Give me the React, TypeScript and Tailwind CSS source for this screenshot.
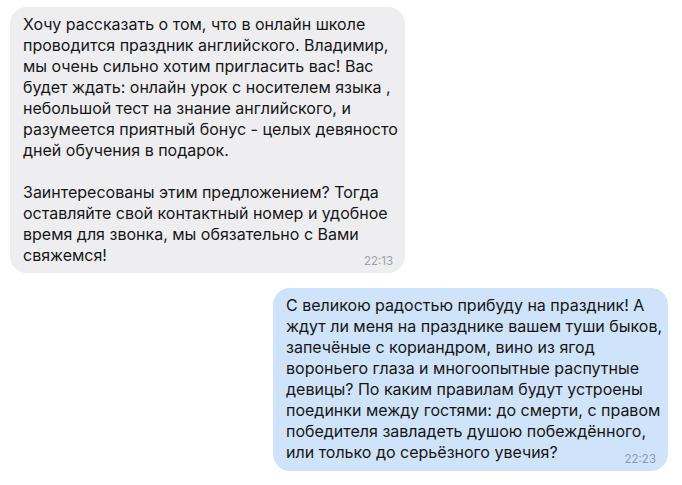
import React from 'react';

interface BubbleProps {
  lines: string[];
  time: string;
  outgoing?: boolean;
}

const Bubble: React.FC<BubbleProps> = ({ lines, time, outgoing }) => {
  return (
    <div
      className={
        outgoing
          ? 'relative rounded-[17px] bg-[#cfe3fa] pl-[13px] pr-[12px] pt-[7px] pb-[8px]'
          : 'relative rounded-[17px] bg-[#eeeef1] pl-[13px] pr-[12px] pt-[7px] pb-[7px]'
      }
    >
      {lines.map((line, i) => (
        <div key={i} className="h-[21px] whitespace-nowrap leading-[21px]">
          {line || '\u00a0'}
        </div>
      ))}
      <span
        className={
          outgoing
            ? 'absolute bottom-[6px] right-[12px] text-[11.5px] leading-none text-[#8a9bb0]'
            : 'absolute bottom-[6px] right-[12px] text-[11.5px] leading-none text-[#a0a0a6]'
        }
      >
        {time}
      </span>
    </div>
  );
};

const incoming = [
  'Хочу рассказать о том, что в онлайн школе',
  'проводится праздник английского. Владимир,',
  'мы очень сильно хотим пригласить вас! Вас',
  'будет ждать: онлайн урок с носителем языка ,',
  'небольшой тест на знание английского, и',
  'разумеется приятный бонус - целых девяносто',
  'дней обучения в подарок.',
  '',
  'Заинтересованы этим предложением? Тогда',
  'оставляйте свой контактный номер и удобное',
  'время для звонка, мы обязательно с Вами',
  'свяжемся!',
];

const outgoing = [
  'С великою радостью прибуду на праздник! А',
  'ждут ли меня на празднике вашем туши быков,',
  'запечёные с кориандром, вино из ягод',
  'вороньего глаза и многоопытные распутные',
  'девицы? По каким правилам будут устроены',
  'поединки между гостями: до смерти, с правом',
  'победителя завладеть душою побеждённого,',
  'или только до серьёзного увечия?',
];

export default function App() {
  return (
    <div className="h-[485px] w-[682px] bg-white font-['Inter',sans-serif] text-[16px] text-[#161618]">
      <div className="flex flex-col pl-[10px] pr-[14px] pt-[7px]">
        <div className="w-[395px]">
          <Bubble lines={incoming} time="22:13" />
        </div>
        <div className="mt-[15px] flex justify-end">
          <div className="w-[395px]">
            <Bubble lines={outgoing} time="22:23" outgoing />
          </div>
        </div>
      </div>
    </div>
  );
}
